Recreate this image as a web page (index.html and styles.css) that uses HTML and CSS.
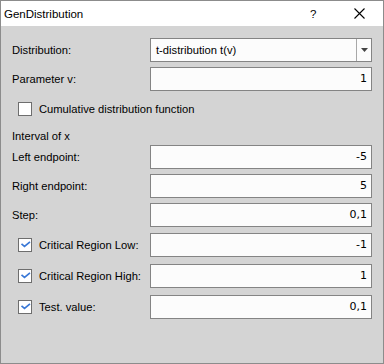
FILE: index.html
```html
<!DOCTYPE html>
<html lang="en">
<head>
    <meta charset="UTF-8">
    <title>GenDistribution</title>
    <link rel="stylesheet" href="styles.css">
</head>
<body>

<div class="window">
    <div class="titlebar">
        <span class="title">GenDistribution</span>
        <span class="help">?</span>
        <span class="close">
            <svg width="11" height="11" viewBox="0 0 11 11">
                <path d="M0.5 0.5 L10.5 10.5 M10.5 0.5 L0.5 10.5" stroke="#000" stroke-width="1.1" fill="none"/>
            </svg>
        </span>
    </div>

    <div class="content">
        <div class="row">
            <label class="label">Distribution:</label>
            <div class="combo">
                <span class="combo-text">t-distribution t(v)</span>
                <span class="combo-arrow">
                    <svg width="7" height="4" viewBox="0 0 7 4"><path d="M0 0 H7 L3.5 4 Z" fill="#444"/></svg>
                </span>
            </div>
        </div>
        <div class="row">
            <label class="label">Parameter v:</label>
            <div class="field">1</div>
        </div>
        <div class="row check-row">
            <span class="checkbox"></span>
            <span class="check-label">Cumulative distribution function</span>
        </div>
        <div class="row section-row">
            <span class="label">Interval of x</span>
        </div>
        <div class="row">
            <label class="label">Left endpoint:</label>
            <div class="field">-5</div>
        </div>
        <div class="row">
            <label class="label">Right endpoint:</label>
            <div class="field">5</div>
        </div>
        <div class="row">
            <label class="label">Step:</label>
            <div class="field">0,1</div>
        </div>
        <div class="row check-row">
            <span class="checkbox"><svg width="11" height="11" viewBox="0 0 11 11"><path d="M1.5 3.8 L4.5 6.3 L10 1.8" stroke="#3a78d6" stroke-width="1.7" fill="none"/></svg></span>
            <span class="check-label grow">Critical Region Low:</span>
            <div class="field">-1</div>
        </div>
        <div class="row check-row">
            <span class="checkbox"><svg width="11" height="11" viewBox="0 0 11 11"><path d="M1.5 3.8 L4.5 6.3 L10 1.8" stroke="#3a78d6" stroke-width="1.7" fill="none"/></svg></span>
            <span class="check-label grow">Critical Region High:</span>
            <div class="field">1</div>
        </div>
        <div class="row check-row">
            <span class="checkbox"><svg width="11" height="11" viewBox="0 0 11 11"><path d="M1.5 3.8 L4.5 6.3 L10 1.8" stroke="#3a78d6" stroke-width="1.7" fill="none"/></svg></span>
            <span class="check-label grow">Test. value:</span>
            <div class="field">0,1</div>
        </div>
    </div>
</div>

</body>
</html>
```

FILE: styles.css
```css
body {
    margin: 0;
    padding: 0;
    font-family: 'Liberation Sans', Arial, sans-serif;
    font-size: 11.2px;
    color: #000;
}

.window {
    width: 384px;
    height: 364px;
    box-sizing: border-box;
    border: 1px solid #8c8c8c;
    background-color: #d4d4d4;
    display: flex;
    flex-direction: column;
}

.titlebar {
    height: 25px;
    background-color: #ffffff;
    display: flex;
    align-items: center;
    padding-left: 3px;
    font-size: 11.5px;
}

.title {
    flex: 1;
}

.help {
    width: 10px;
    margin-right: 34px;
}

.close {
    width: 11px;
    height: 11px;
    margin-right: 18px;
    display: flex;
}

.content {
    flex: 1;
    padding: 12px 11px 0 11px;
    display: flex;
    flex-direction: column;
    gap: 5px;
}

.row {
    height: 24px;
    display: flex;
    align-items: center;
}

.label {
    width: 138px;
}

.field {
    width: 222px;
    height: 24px;
    box-sizing: border-box;
    border: 1px solid #848484;
    background-color: #fcfcfc;
    text-align: right;
    padding-right: 4px;
    line-height: 22px;
    font-family: 'DejaVu Sans', Verdana, sans-serif;
    font-size: 11px;
}

.combo {
    width: 222px;
    height: 24px;
    box-sizing: border-box;
    border: 1px solid #848484;
    background-color: #fcfcfc;
    display: flex;
}

.combo-text {
    flex: 1;
    padding-left: 5px;
    line-height: 22px;
}

.combo-arrow {
    width: 14px;
    border-left: 1px solid #a8a8a8;
    display: flex;
    align-items: center;
    justify-content: center;
}

.check-row {
    height: 26px;
}

.section-row {
    height: 13px;
    line-height: 19px;
    align-items: flex-start;
}

.checkbox {
    width: 14px;
    height: 14px;
    box-sizing: border-box;
    border: 1px solid #6e6e6e;
    background-color: #ffffff;
    margin-left: 6px;
    margin-right: 7px;
    display: flex;
    align-items: center;
    justify-content: center;
}

.grow {
    width: 111px;
}
```
